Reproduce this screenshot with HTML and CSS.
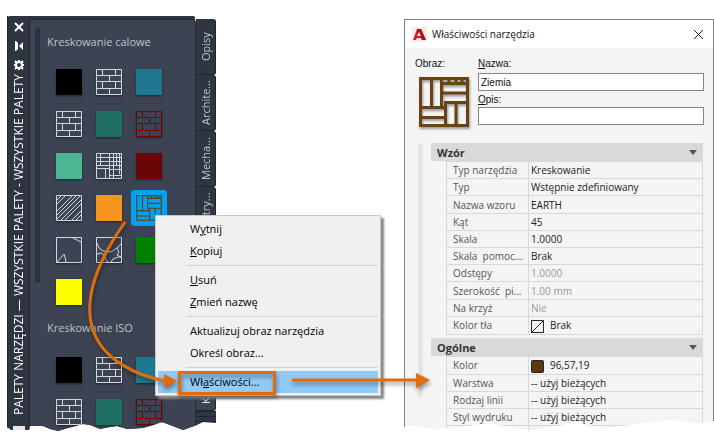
FILE: index.html
```html
<!DOCTYPE html>
<html lang="pl">
<head>
<meta charset="utf-8">
<title>Palety narzędzi</title>
<link rel="stylesheet" href="styles.css">
</head>
<body>
<svg class="defs" aria-hidden="true">
  <symbol id="brick" viewBox="0 0 26 26"><path d="M.5.5h25v25H.5zM0 6.5h26M0 12.5h26M0 19.5h26M6.5 0v6M19.5 0v6M13.5 7v6M6.5 13v6M19.5 13v6M13.5 20v6"/></symbol>
  <symbol id="net" viewBox="0 0 26 26"><path d="M.5.5h25v25H.5zM4.5 1v12M0 4.5h26M0 8.5h26M0 12.5h26M13.5 1v24M17.5 1v24M20.5 1v12M23.5 1v20M0 15.5h13M9.5 16v10M13 16.5h13M13 22.5h13"/></symbol>
  <symbol id="diagonal" viewBox="0 0 26 26"><path d="M.5.5h25v25H.5zM1 5l4-4M1 9l8-8M1 16 16 1M1 20 20 1M1 24 24 1M5 25 25 5M9 25 25 9M16 25l9-9M20 25l5-5"/></symbol>
  <symbol id="grass" viewBox="0 0 26 26"><path d="M.5.5h25v25H.5zM17 1l4 2 4 2M1 25l7-8 1 3 1 5"/></symbol>
  <symbol id="gravel" viewBox="0 0 26 26"><path d="M.5.5h25v25H.5zM1 6l2 5 4 3 8 1 6-4 4-4M1 17l4-1 3 2 2 5 2 2M21 11l2 4-2 3 4 2M15 25l2-3 5-2 3 0"/></symbol>
  <symbol id="earth" viewBox="0 0 50 50"><path d="M1.5 1.5h47v47h-47zM12.500 1v28M22.500 1v28M24 6.500h25M24 16h25M25 25.500h24M1 30.500h26M1 40.500h26M26.500 25v24M37 25v24M30 2v4M37 2v4M43 2v4"/></symbol>
</svg>
<main class="scene">
  <section class="palette" aria-label="Palety narzędzi">
    <header class="palette-bar">
      <button class="bar-button" aria-label="Zamknij"><svg viewBox="0 0 12 12"><path d="M2 2l8 8M10 2l-8 8"/></svg></button>
      <button class="bar-button" aria-label="Autoukrywanie"><svg viewBox="0 0 12 12"><path class="solid" d="M2 1h1l2 2v6l-2 2H2zM10 2v8L6 6z"/></svg></button>
      <button class="bar-button" aria-label="Właściwości"><svg viewBox="0 0 12 12"><circle cx="6" cy="6" r="3"/><path d="M6 1v2M6 9v2M1 6h2M9 6h2M2 2l2 2M8 8l2 2M10 2L8 4M4 8l-2 2"/></svg></button>
      <span class="palette-title">PALETY NARZĘDZI — WSZYSTKIE PALETY - WSZYSTKIE PALETY</span>
      <span class="grip"></span>
    </header>
    <div class="palette-body">
      <div class="palette-scroll"></div>
      <div class="groups">
        <h2>Kreskowanie calowe</h2>
        <div class="swatches">
          <button class="swatch black" aria-label="Czarny"></button>
          <button class="swatch" aria-label="Cegła"><svg><use href="#brick"/></svg></button>
          <button class="swatch blue" aria-label="Niebieski"></button>
          <button class="swatch" aria-label="Mur"><svg><use href="#brick"/></svg></button>
          <button class="swatch teal" aria-label="Morski"></button>
          <button class="swatch red-line" aria-label="Cegła czerwona"><svg><use href="#brick"/></svg></button>
          <button class="swatch mint" aria-label="Miętowy"></button>
          <button class="swatch" aria-label="Siatka"><svg><use href="#net"/></svg></button>
          <button class="swatch maroon" aria-label="Bordowy"></button>
          <button class="swatch" aria-label="Stal"><svg><use href="#diagonal"/></svg></button>
          <button class="swatch orange" aria-label="Pomarańczowy"></button>
          <button class="swatch selected" aria-label="Ziemia"><svg><use href="#earth"/></svg></button>
          <button class="swatch" aria-label="Trawa"><svg><use href="#grass"/></svg></button>
          <button class="swatch" aria-label="Żwir"><svg><use href="#gravel"/></svg></button>
          <button class="swatch green" aria-label="Zielony"></button>
          <button class="swatch yellow" aria-label="Żółty"></button>
        </div>
        <h2>Kreskowanie ISO</h2>
        <div class="swatches">
          <button class="swatch black" aria-label="Czarny"></button>
          <button class="swatch" aria-label="Cegła"><svg><use href="#brick"/></svg></button>
          <button class="swatch blue" aria-label="Niebieski"></button>
          <button class="swatch" aria-label="Mur"><svg><use href="#brick"/></svg></button>
          <button class="swatch teal" aria-label="Morski"></button>
          <button class="swatch red-line" aria-label="Cegła czerwona"><svg><use href="#brick"/></svg></button>
        </div>
      </div>
    </div>
    <nav class="tabs">
      <button class="tab">Opisy</button>
      <button class="tab">Archite...</button>
      <button class="tab">Mecha...</button>
      <button class="tab">Elektry...</button>
      <span class="tab-space"></span>
      <button class="tab active">Kresko...</button>
      <span class="tab-stack"></span>
    </nav>
  </section>

  <section class="dialog" aria-label="Właściwości narzędzia">
    <header class="dialog-bar">
      <svg class="logo" viewBox="0 0 15 15"><path class="logo-bg" d="M0 0h15v15H0z"/><path class="logo-dark" d="M1 13 5 2h4l5 11h-4L9 11H5l-1 2z"/><path class="logo-light" d="M5 2h4l5 11h-4z"/><path class="logo-bg" d="M7 5l2 4H5z"/></svg>
      <h1>Właściwości narzędzia</h1>
      <button class="close" aria-label="Zamknij"><svg viewBox="0 0 11 11"><path d="M1 1l9 9M10 1l-9 9"/></svg></button>
    </header>
    <div class="identity">
      <div class="image-field">
        <span>Obraz:</span>
        <svg class="preview"><use href="#earth"/></svg>
      </div>
      <div class="fields">
        <label for="name"><u>N</u>azwa:</label>
        <input id="name" type="text" value="Ziemia">
        <label for="desc"><u>O</u>pis:</label>
        <input id="desc" type="text">
      </div>
    </div>
    <div class="properties">
      <div class="property-scroll"></div>
      <div class="property-groups">
        <button class="group-head" aria-expanded="true">Wzór<svg viewBox="0 0 8 5"><path d="M0 0h8L4 5z"/></svg></button>
        <table class="pattern">
          <tr><th>Typ narzędzia</th><td>Kreskowanie</td></tr>
          <tr><th>Typ</th><td>Wstępnie zdefiniowany</td></tr>
          <tr><th>Nazwa wzoru</th><td>EARTH</td></tr>
          <tr><th>Kąt</th><td>45</td></tr>
          <tr><th>Skala</th><td>1.0000</td></tr>
          <tr><th>Skala&nbsp; pomoc...</th><td>Brak</td></tr>
          <tr class="off"><th>Odstępy</th><td>1.0000</td></tr>
          <tr class="off"><th>Szerokość&nbsp; pi...</th><td>1.00 mm</td></tr>
          <tr class="off"><th>Na krzyż</th><td>Nie</td></tr>
          <tr><th>Kolor tła</th><td><svg class="chip" viewBox="0 0 13 13"><path d="M.5.5h12v12H.5zM1 12 12 1"/></svg>Brak</td></tr>
        </table>
        <button class="group-head" aria-expanded="true">Ogólne<svg viewBox="0 0 8 5"><path d="M0 0h8L4 5z"/></svg></button>
        <table class="general">
          <tr><th>Kolor</th><td><svg class="chip brown" viewBox="0 0 13 13"><rect x=".5" y=".5" width="12" height="12" rx="1"/></svg>96,57,19</td></tr>
          <tr><th>Warstwa</th><td>-- użyj bieżących</td></tr>
          <tr><th>Rodzaj linii</th><td>-- użyj bieżących</td></tr>
          <tr><th>Styl wydruku</th><td>-- użyj bieżących</td></tr>
          <tr><th>&nbsp;</th><td>&nbsp;</td></tr>
        </table>
      </div>
    </div>
  </section>

  <div class="menu" role="menu">
    <button role="menuitem">W<u>y</u>tnij</button>
    <button role="menuitem"><u>K</u>opiuj</button>
    <hr>
    <button role="menuitem"><u>U</u>suń</button>
    <button role="menuitem"><u>Z</u>mień nazwę</button>
    <hr>
    <button role="menuitem">Aktualizuj obraz narzędzia</button>
    <button role="menuitem">Określ obraz...</button>
    <hr>
    <button role="menuitem" class="current">Wł<u>a</u>ściwości...</button>
  </div>

  <svg class="callouts" viewBox="0 0 714 447" aria-hidden="true">
    <path class="line" d="M125 222C97 262 83 300 93 330C103 360 137 376 166 381"/>
    <path class="head" d="M164 374l13 7-13 7z"/>
    <path class="line" d="M292 380h126"/>
    <path class="head" d="M416 373l14 7-14 8z"/>
    <rect class="line" x="179.500" y="372.500" width="95" height="21"/>
  </svg>
</main>
</body>
</html>
```
FILE: styles.css
```css
* { box-sizing: border-box; }
body {
  margin: 0;
  background: #fff;
  font-family: "Open Sans", "Noto Sans", sans-serif;
  font-size: 11px;
}
button { font: inherit; color: inherit; border: 0; padding: 0; background: none; }
h1, h2 { margin: 0; font-weight: 400; }
svg { display: block; fill: none; stroke: currentColor; }
.defs { position: absolute; width: 0; height: 0; }
.scene { position: relative; display: flex; align-items: flex-start; padding-left: 7px; }

/* Tool palette */
.palette {
  display: flex;
  flex: none;
  align-items: stretch;
  height: 416px;
  margin-top: 16px;
  background: linear-gradient(90deg, #2e3440 188px, transparent 188px);
  border-radius: 3px 0 0 0;
  color: #bec2c8;
  clip-path: polygon(0 0, 187px 0, 190px 3px, 100% 3px, 100% 407px, 196px 406px, 190px 409px, 176px 414px, 163px 409px, 155px 406px, 146px 409px, 136px 412px, 120px 413px, 110px 410px, 103px 411px, 93px 413px, 83px 409px, 76px 408px, 61px 412px, 51px 415px, 43px 413px, 36px 410px, 23px 410px, 22px 414px, 4px 414px, 0 411px);
}
.palette-bar {
  display: flex;
  flex-direction: column;
  align-items: center;
  gap: 7px;
  width: 23px;
  padding: 5px 0 0;
  border-left: 1px solid #20252f;
  border-right: 1px solid #242a35;
  color: #fff;
}
.bar-button { flex: none; width: 12px; height: 12px; }
.bar-button svg { width: 12px; height: 12px; stroke-width: 2; }
.bar-button .solid { fill: #fff; stroke: none; }
.palette-title {
  flex: 1;
  min-height: 0;
  padding-top: 4px;
  font-size: 12px;
  writing-mode: vertical-rl;
  transform: rotate(180deg);
  white-space: nowrap;
  line-height: 16px;
}
.grip { flex: none; width: 12px; height: 6px; background: #e6e6e6; }
.palette-body {
  display: flex;
  gap: 7px;
  width: 166px;
  margin-top: 3px;
  padding: 7px 0 0 5px;
  background: #3c4453;
  border-right: 1px solid #242a35;
  border-top: 1px solid #242a35;
  border-radius: 4px 4px 0 0;
  overflow: hidden;
}
.palette-scroll { flex: none; width: 5px; height: 256px; border-radius: 3px; background: #2b313d; }
.groups { flex: 1; min-width: 0; }
.groups h2 { height: 42px; padding-top: 5px; font-size: 11px; line-height: 20px; white-space: nowrap; }
.swatches {
  display: grid;
  grid-template-columns: repeat(3, 26px);
  gap: 16px 14px;
  padding: 0 0 8px 9px;
}
.swatches + h2 { height: 44px; }
.swatch { width: 26px; height: 26px; color: #d4d7dc; box-shadow: 0 1px 2px #20252f; }
.swatch svg { width: 26px; height: 26px; }
.black { background: #000; }
.blue { background: #1f7890; }
.teal { background: #1f6f62; }
.mint { background: #4db494; }
.maroon { background: #6b0606; }
.orange { background: #f7941d; }
.green { background: #008000; }
.yellow { background: #ff0; }
.red-line { color: #7a0000; }
.selected {
  border-radius: 1px;
  background: #00a2f0;
  color: #603913;
  box-shadow: 0 0 0 5px #00a2f0;
}
.selected svg { stroke-width: 2; }

.tabs { display: flex; flex-direction: column; width: 20px; padding-top: 3px; }
.tab {
  flex: none;
  height: 56px;
  border: 1px solid #20252f;
  border-width: 1px 0 0 1px;
  border-radius: 3px 0 0 3px;
  background: #2f3541;
  writing-mode: vertical-rl;
  transform: rotate(180deg);
  line-height: 18px;
  text-align: center;
  white-space: nowrap;
}
.tab-space { height: 112px; background: #2f3541; }
.tab.active { background: #3c4453; color: #e0e3e7; }
.tab-stack { flex: 1; background: repeating-linear-gradient(#20252f 0 1px, #2f3541 1px 5px); }

/* Tool properties window */
.dialog {
  flex: 1;
  min-width: 0;
  height: 412px;
  margin: 19px 0 0 188px;
  border: 1px solid #808080;
  background: #f4f4f4;
  clip-path: polygon(0 0, 100% 0, 100% 402px, 94% 405px, 88% 400px, 77% 404px, 70% 407px, 64% 409px, 56% 404px, 49% 407px, 42% 411px, 37% 410px, 28% 404px, 23% 406px, 16% 409px, 10% 410px, 3% 407px, 0 408px);
}
.dialog-bar { display: flex; align-items: center; height: 28px; padding: 0 9px 0 7px; background: #fff; }
.logo { width: 15px; height: 15px; stroke: none; }
.logo-bg { fill: #fbe9e3; }
.logo-dark { fill: #c8202a; }
.logo-light { fill: #a9151f; }
.dialog-bar h1 { flex: 1; padding-left: 5px; font-size: 10px; color: #111; }
.close svg { width: 11px; height: 11px; color: #222; }
.identity {
  display: flex;
  gap: 10px;
  padding: 9px 9px 0 10px;
  font: 10px/14px "Liberation Sans", Arial, sans-serif;
  color: #111;
}
.image-field { width: 53px; }
.preview { width: 50px; height: 50px; margin: 6px 0 0 4px; color: #6b4216; stroke-width: 3; filter: drop-shadow(1px 2px 1px #999); }
.fields { display: flex; flex: 1; flex-direction: column; }
.fields label { height: 16px; line-height: 14px; }
.fields input { height: 18px; padding: 0 2px; border: 1px solid #858585; background: #fff; font: inherit; color: #111; }
.fields input + label { line-height: 18px; }
.properties { display: flex; gap: 8px; padding: 16px 10px 0 13px; }
.property-scroll { width: 5px; height: 254px; border-radius: 3px; background: #e4e4e4; }
.property-groups { flex: 1; font-size: 10px; }
.group-head {
  display: flex;
  align-items: center;
  justify-content: space-between;
  width: 100%;
  height: 18px;
  padding: 0 6px;
  background: #d9d9d9;
  font-size: 11px;
  font-weight: 700;
  color: #333;
}
.group-head svg { width: 8px; height: 5px; fill: #555; stroke: none; }
table { width: calc(100% - 15px); margin-left: 15px; border-collapse: collapse; table-layout: fixed; line-height: 14px; }
.pattern { height: 174px; margin-bottom: 3px; }
.general { height: 87px; }
th, td { padding: 0; border: 1px solid #d8d8d8; text-align: left; font-weight: 400; white-space: nowrap; }
th { width: 82px; padding-left: 6px; color: #555; }
td { padding-left: 2px; color: #222; }
.off td { color: #999; }
.chip { display: inline-block; width: 13px; height: 13px; margin-right: 6px; vertical-align: middle; color: #222; }
.brown { fill: #603913; }

/* Context menu */
.menu {
  position: absolute;
  left: 155px;
  top: 215px;
  width: 226px;
  padding: 2px;
  border: 1px solid #c8c8c8;
  background: #f0f0f0;
  box-shadow: 3px 3px 2px #888;
  color: #000;
}
.menu button { display: block; width: 100%; height: 22px; padding: 0 0 2px 32px; text-align: left; }
.menu hr { height: 1px; margin: 3px 0 3px 28px; border: 0; background: #d2d2d2; }
.menu .current { background: #91c9f7; }

/* Callout arrows */
.callouts { position: absolute; left: 0; top: 0; width: 714px; height: 447px; pointer-events: none; color: #e36c0a; filter: drop-shadow(1px 3px 2px #0006); }
.line { stroke-width: 3; }
.head { fill: #e36c0a; stroke: none; }
```
